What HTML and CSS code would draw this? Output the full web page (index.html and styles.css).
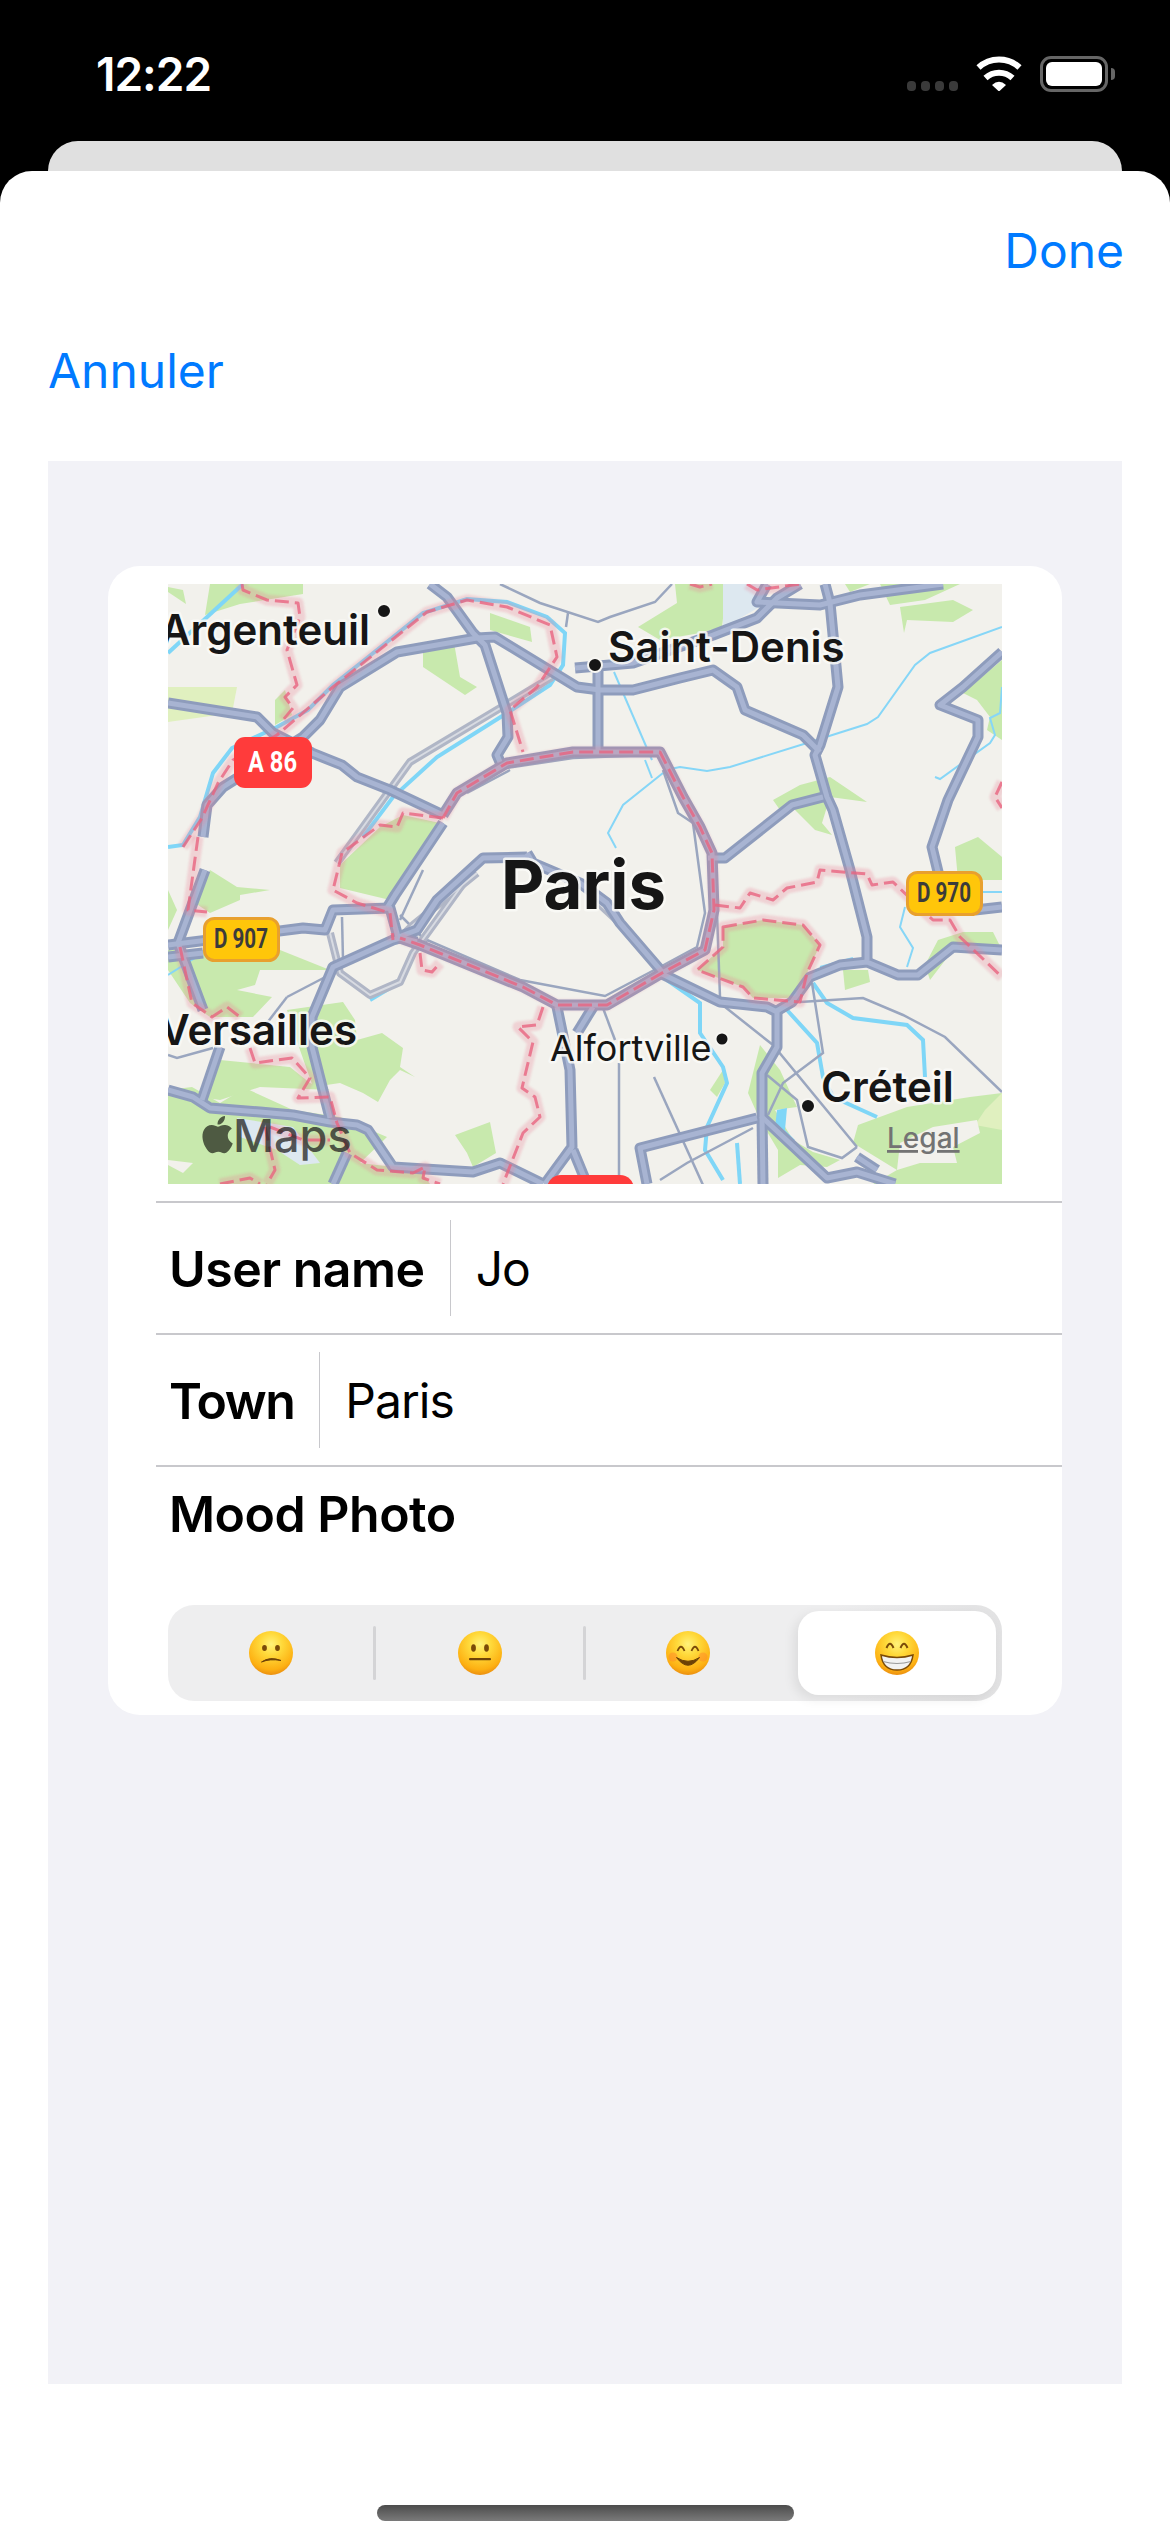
FILE: index.html
```html
<!DOCTYPE html>
<html lang="en">
<head>
    <meta charset="UTF-8">
    <meta name="viewport" content="width=device-width, initial-scale=1.0">
    <title>Mood</title>
    <link rel="stylesheet" href="styles.css">
</head>
<body>
    <div class="status-bar">
        <span class="hora">12:22</span>
        <div class="status-iconos">
            <div class="senal"><i></i><i></i><i></i><i></i></div>
            <svg class="wifi" width="48" height="36" viewBox="0 0 48 36">
                <path d="M3.500 12.500A30 30 0 0 1 44.500 12.500" fill="none" stroke="#fff" stroke-width="6"/>
                <path d="M10.500 23A20 20 0 0 1 37.500 23" fill="none" stroke="#fff" stroke-width="6"/>
                <path d="M17 30Q24 23.500 31 30L24 36.500Z" fill="#fff"/>
            </svg>
            <div class="bateria"><div class="bateria-nivel"></div></div>
            <div class="bateria-punta"></div>
        </div>
    </div>
    <div class="tarjeta-fondo"></div>

    <div class="hoja">
        <div class="fila-done"><span class="enlace">Done</span></div>
        <div class="fila-annuler"><span class="enlace">Annuler</span></div>

        <div class="contenido">
            <div class="tarjeta">
                <svg class="mapa" width="834" height="600" viewBox="168 584 834 600">
                    <defs>
                        <g id="vias">
                            <path d="M168 703L257 717L273 733L312 753L342 765L357 777L390 790L443 815"/>
                            <path d="M203 837L207 805L223 787L303 737L320 720L340 687L397 652L477 638L495 637L577 687L600 690L633 690L680 678L713 670L737 687L745 710L803 735L820 752"/>
                            <path d="M430 584L447 597L473 633L485 645L507 713L508 737L497 755L500 762"/>
                            <path d="M598 665L598 750"/>
                            <path d="M575 668L633 663L713 635L757 618L777 598L800 584"/>
                            <path d="M767 584L757 602L820 605L860 595L943 584"/>
                            <path d="M825 584L830 603L838 687L820 745L815 755L827 797L833 810L850 870L867 937L867 960"/>
                            <path d="M823 797L792 805L725 858L708 858"/>
                            <path d="M1002 652L963 687L940 705L978 720L978 737L948 800L932 847L940 880"/>
                            <path d="M1002 907L975 910"/>
                            <path d="M1002 950L953 947L918 975L898 975L867 962L840 965L810 977L792 1002L775 1012"/>
                            <path d="M660 973L720 1002L767 1007L777 1012L777 1047L762 1073L762 1117L827 1178L857 1172L895 1184"/>
                            <path d="M857 1157L877 1170"/>
                            <path d="M762 1117L763 1184"/>
                            <path d="M757 1118L640 1148L647 1184"/>
                            <path d="M443 815L457 793L507 763L573 752L660 752L683 797L700 827L712 853L714 910L705 950L662 973L607 1005L557 1005L523 987L420 945L400 938L393 940L333 967L312 1017L312 1047L330 1118"/>
                            <path d="M443 823L395 895L387 908"/>
                            <path d="M396 938L417 930L437 900L483 858L527 857"/>
                            <path d="M527 853L533 863L580 883L607 903L620 923L663 973"/>
                            <path d="M168 1090L193 1097L210 1108L260 1112L293 1115L330 1122L357 1125L368 1130L393 1167L473 1172L500 1163L543 1184"/>
                            <path d="M205 870L178 943L203 1010"/>
                            <path d="M220 1047L202 1100"/>
                            <path d="M347 1153L333 1184"/>
                            <path d="M168 945L303 928L325 930L333 910L390 908L398 937L417 942"/>
                            <path d="M168 957L203 953"/>
                            <path d="M557 1007L570 1070L572 1147L550 1177L545 1184"/>
                            <path d="M593 1007L577 1033"/>
                            <path d="M573 1150L587 1184"/>
                        </g>
                        <g id="grises">
                            <path d="M337 863L410 762L527 692L552 677"/>
                            <path d="M330 933L340 973L370 995L400 982L413 953L473 870"/>
                            <path d="M400 938L413 925L477 873"/>
                            <path d="M620 923L590 895"/>
                        </g>
                        <g id="frontera">
                            <path d="M242 584L243 590L267 600L298 603L300 617L287 650L297 685L285 697L293 708L283 720"/>
                            <path d="M183 847L202 818L218 783L233 760L277 735L333 687L427 612L467 600L507 607L550 625L557 657L537 687L510 710L523 752"/>
                            <path d="M443 818L457 793L507 763L573 752L660 752L683 797L700 827L712 853L714 910L705 950L662 973L607 1005L557 1005L523 987L420 945L400 938"/>
                            <path d="M443 818L403 813L397 827L380 825L342 853L333 890L357 903L390 913L393 940"/>
                            <path d="M198 837L188 910L207 912"/>
                            <path d="M180 947L192 1003L212 1017L227 1007L240 1017"/>
                            <path d="M250 1048L255 1063L292 1058L310 1078L298 1098L330 1097L337 1123L350 1153L377 1170L413 1173L425 1167L423 1178L440 1184"/>
                            <path d="M270 1127L303 1140L330 1140"/>
                            <path d="M265 1127L275 1170L267 1184"/>
                            <path d="M220 1184L250 1178L260 1184"/>
                            <path d="M543 1007L537 1025L518 1027L533 1042L522 1088L535 1097L540 1117L523 1133L503 1184"/>
                            <path d="M420 953L422 970L432 972L440 963"/>
                            <path d="M715 905L740 908L750 893L773 900L787 888L817 882L820 870L867 874L872 885L893 882L933 920L950 920L960 937L1002 977"/>
                            <path d="M723 927L763 920L803 925L820 945L807 973L800 1002L753 998L743 987L697 970L723 947Z"/>
                            <path d="M1002 782L995 797L1002 808"/>
                            <path d="M747 584L757 590L800 584"/>
                            <path d="M690 584L700 587L712 584"/>
                        </g>
                    </defs>

                    <rect class="mapa-fondo" x="168" y="584" width="834" height="600"/>

                    <g class="verde">
                        <polygon points="168,587 183,590 186,604 168,592"/>
                        <polygon points="210,584 303,584 303,594 240,604 205,615"/>
                        <polygon points="490,613 530,627 532,642 490,630"/>
                        <polygon points="423,653 453,637 460,677 477,687 465,695 423,667"/>
                        <polygon points="638,627 677,603 675,584 727,584 722,627 700,633 660,640"/>
                        <polygon points="773,800 800,785 830,777 867,802 830,797 822,823 832,835 815,830 790,805 780,810"/>
                        <polygon points="900,607 953,600 973,610 953,622 907,620 904,633"/>
                        <polygon points="845,584 870,584 850,592"/>
                        <polygon points="880,584 960,584 925,600 890,605"/>
                        <polygon points="955,847 978,837 1002,857 1002,880 958,880"/>
                        <polygon points="963,693 1002,660 1002,740 987,730 990,717 977,700"/>
                        <polygon points="340,865 380,827 403,815 440,823 390,900 340,888"/>
                        <polygon points="723,927 763,920 803,925 820,945 807,973 790,998 753,998 743,987 697,970 723,947"/>
                        <polygon points="168,890 177,910 168,930"/>
                        <polygon points="210,870 237,887 270,890 240,895 240,900 210,913 195,903"/>
                        <polygon points="168,950 280,950 330,970 260,970 255,985 237,990 272,997 253,1017 210,1017 190,1003 168,970"/>
                        <polygon points="287,1010 343,1002 355,1020 357,1040 382,1033 403,1048 400,1067 415,1077 400,1070 390,1080 378,1102 363,1093 340,1083 313,1087 300,1050"/>
                        <polygon points="168,1090 192,1087 220,1103 245,1088 293,1110 340,1117 387,1137 360,1163 420,1170 430,1184 168,1184"/>
                        <polygon points="220,1060 290,1067 310,1083 330,1090 260,1087 220,1100 200,1097"/>
                        <polygon points="455,1135 490,1122 496,1153 473,1167 467,1153"/>
                        <polygon points="748,1093 760,1045 780,1070 797,1107 775,1110 793,1140 813,1152 840,1160 827,1167 800,1165 778,1178 778,1150 760,1120"/>
                        <polygon points="858,1125 907,1107 970,1097 1002,1093 1002,1184 873,1184 897,1170 853,1143"/>
                        <polygon points="843,970 868,970 870,982 845,990"/>
                        <polygon points="938,940 963,932 993,932 1002,950 953,950 930,980 925,965"/>
                        <polygon points="710,1090 723,1070 725,1083 717,1097"/>
                        <polygon points="275,700 285,690 292,715 275,725"/>
                    </g>
                    <polygon class="verde-claro" points="168,687 237,687 232,713 168,722"/>
                    <polygon class="verde-claro" points="985,1110 1002,1093 1002,1130 975,1125"/>
                    <polygon class="mapa-fondo" points="168,1160 193,1163 183,1173 168,1165"/>
                    <polygon class="mapa-fondo" points="933,1127 977,1120 980,1133 953,1147 957,1163 920,1163 897,1170 900,1143"/>
                    <polygon class="lago" points="723,584 763,584 763,605 723,628"/>
                    <polygon class="lago" points="237,1118 293,1127 320,1163 300,1165 277,1150 240,1137"/>

                    <g class="agua-ancha">
                        <path d="M168 847L183 845L200 817L213 773L232 748L277 727L308 710L333 685L367 658L423 613L467 599L507 602L547 617L565 633L563 665L550 685L507 713L437 757L393 797L363 837"/>
                        <path d="M168 653L243 584"/>
                        <path d="M667 980L700 1003L700 1033L723 1067L727 1083L707 1127L705 1150L723 1180"/>
                        <path d="M787 1010L817 1043L823 1077L833 1097L877 1117"/>
                        <path d="M813 983L827 1003L853 1018L907 1025L923 1040L925 1077"/>
                        <path d="M737 1143L740 1184"/>
                        <path d="M370 1000L400 982"/>
                    </g>
                    <g class="agua-fina">
                        <path d="M663 773L623 805L608 833L616 848"/>
                        <path d="M645 760L652 778"/>
                        <path d="M665 770L680 767L707 771L730 767L807 743L867 724L878 717L915 665L930 653L1002 627"/>
                        <path d="M935 777L940 779L990 743L995 735L990 718L1000 713L1002 687"/>
                        <path d="M820 967L853 958"/>
                        <path d="M905 907L900 927L913 948L907 967"/>
                        <path d="M1002 892L982 892"/>
                        <path d="M614 672L652 760"/>
                        <path d="M168 975L195 958"/>
                    </g>
                    <polygon class="estanque" points="777,1110 787,1108 785,1130 795,1140 785,1140 775,1127"/>

                    <g class="via-fina">
                        <path d="M500 584L540 603L598 622L610 617L655 602L672 584"/>
                        <path d="M568 613L566 627"/>
                        <path d="M427 940L520 980L605 996L660 967L697 947L705 913L693 823L678 813L663 770"/>
                        <path d="M510 770L467 793"/>
                        <path d="M720 1003L773 1045L857 1147"/>
                        <path d="M717 913L720 997"/>
                        <path d="M800 1002L863 998L903 1015L945 1037L1002 1092"/>
                        <path d="M812 983L823 1053L783 1083L768 1115"/>
                        <path d="M767 1075L797 1100L808 1147L842 1158L857 1147"/>
                        <path d="M603 1008L615 1040"/>
                        <path d="M619 1063L619 1177"/>
                        <path d="M654 1077L703 1185"/>
                        <path d="M753 1128L687 1163L660 1180"/>
                        <path d="M287 997L333 973"/>
                        <path d="M287 997L267 1023"/>
                        <path d="M342 917L343 960"/>
                        <path d="M423 870L400 920"/>
                        <path d="M400 915L427 942"/>
                        <path d="M168 1055L177 1058L213 1048"/>
                        <path d="M507 768L573 758L650 755"/>
                    </g>

                    <use class="gris-borde" href="#grises"/>
                    <use class="gris-centro" href="#grises"/>
                    <use class="via-borde" href="#vias"/>
                    <use class="via-centro" href="#vias"/>
                    <use class="frontera-halo" href="#frontera"/>
                    <use class="frontera-linea" href="#frontera"/>

                    <circle class="punto" cx="384" cy="611" r="7"/>
                    <circle class="punto" cx="595" cy="665" r="7"/>
                    <circle class="punto" cx="722" cy="1039" r="6.500"/>
                    <circle class="punto" cx="808" cy="1106" r="7"/>

                    <text class="etiqueta fuerte" x="370" y="645" text-anchor="end">Argenteuil</text>
                    <text class="etiqueta fuerte" x="608" y="662">Saint-Denis</text>
                    <text class="etiqueta fuerte" x="357" y="1045" text-anchor="end">Versailles</text>
                    <text class="etiqueta fuerte" x="821" y="1102">Créteil</text>
                    <text class="etiqueta media" x="550" y="1061">Alfortville</text>
                    <text class="etiqueta grande" x="501" y="909">Paris</text>

                    <rect class="placa-roja" x="234" y="737" width="78" height="51" rx="11"/>
                    <text class="placa-texto blanco" x="248" y="772" textLength="49" lengthAdjust="spacingAndGlyphs">A 86</text>
                    <rect class="placa-amarilla" x="204.500" y="918.500" width="74" height="42" rx="10"/>
                    <text class="placa-texto oscuro" x="214" y="948" textLength="54" lengthAdjust="spacingAndGlyphs">D 907</text>
                    <rect class="placa-amarilla" x="907.500" y="872.500" width="74" height="42" rx="10"/>
                    <text class="placa-texto oscuro" x="917" y="902" textLength="54" lengthAdjust="spacingAndGlyphs">D 970</text>
                    <rect class="placa-roja" x="547" y="1175" width="87" height="40" rx="14"/>

                    <path class="manzana" transform="translate(199 1116) scale(1.550)" d="M12.152 6.896c-.948 0-2.415-1.078-3.960-1.040-2.040.027-3.910 1.183-4.961 3.014-2.117 3.675-.546 9.103 1.519 12.090 1.013 1.454 2.208 3.090 3.792 3.039 1.520-.065 2.090-.987 3.935-.987 1.831 0 2.350.987 3.960.948 1.637-.026 2.676-1.480 3.676-2.948 1.156-1.688 1.636-3.325 1.662-3.415-.039-.013-3.182-1.221-3.220-4.857-.026-3.040 2.480-4.494 2.597-4.559-1.429-2.090-3.623-2.324-4.390-2.376-2-.156-3.675 1.090-4.610 1.090zM15.530 3.830c.843-1.012 1.400-2.427 1.245-3.830-1.207.052-2.662.805-3.532 1.818-.780.896-1.454 2.338-1.273 3.714 1.338.104 2.715-.688 3.559-1.701"/>
                    <text class="maps" x="233" y="1152">Maps</text>
                    <text class="legal" x="887" y="1148">Legal</text>
                </svg>

                <div class="fila fila-primera">
                    <span class="fila-nombre">User name</span>
                    <span class="fila-corte"></span>
                    <span class="fila-valor">Jo</span>
                </div>
                <div class="fila">
                    <span class="fila-nombre nombre-corto">Town</span>
                    <span class="fila-corte"></span>
                    <span class="fila-valor">Paris</span>
                </div>
                <div class="fila fila-mood">
                    <span class="fila-nombre">Mood Photo</span>
                </div>

                <div class="segmentos">
                    <div class="segmento seg-uno">
                        <svg class="emoji" width="44" height="44" viewBox="0 0 44 44">
                            <defs>
                                <radialGradient id="cara" cx="50%" cy="30%" r="72%">
                                    <stop offset="0" stop-color="#fff27a"/>
                                    <stop offset="0.350" stop-color="#ffd93a"/>
                                    <stop offset="0.800" stop-color="#fdb012"/>
                                    <stop offset="1" stop-color="#e88a10"/>
                                </radialGradient>
                            </defs>
                            <circle cx="22" cy="22" r="22" fill="url(#cara)"/>
                            <ellipse cx="15.500" cy="17" rx="2.400" ry="3" fill="#7a4a08"/>
                            <ellipse cx="28.500" cy="17" rx="2.400" ry="3" fill="#7a4a08"/>
                            <path d="M12.500 31Q21 25 32 29.500Q21 27.500 12.500 31Z" fill="#6e4206" stroke="#6e4206" stroke-width="1"/>
                        </svg>
                    </div>
                    <div class="segmento seg-linea">
                        <svg class="emoji" width="44" height="44" viewBox="0 0 44 44">
                            <circle cx="22" cy="22" r="22" fill="url(#cara)"/>
                            <ellipse cx="15.500" cy="17" rx="2.400" ry="3.800" fill="#7a4a08"/>
                            <ellipse cx="28.500" cy="17" rx="2.400" ry="3.800" fill="#7a4a08"/>
                            <rect x="11" y="27" width="22" height="2.200" rx="1" fill="#6e4206"/>
                        </svg>
                    </div>
                    <div class="segmento seg-linea seg-tres">
                        <svg class="emoji" width="44" height="44" viewBox="0 0 44 44">
                            <circle cx="22" cy="22" r="22" fill="url(#cara)"/>
                            <circle cx="7" cy="26" r="4.500" fill="#ff8a2a" opacity="0.500"/>
                            <circle cx="37" cy="26" r="4.500" fill="#ff8a2a" opacity="0.500"/>
                            <path d="M11.500 20Q15 11.500 18.500 20M25.500 20Q29 11.500 32.500 20" fill="none" stroke="#7a4a08" stroke-width="1.800"/>
                            <path d="M10.500 26.500Q22 42 33.500 26.500Q22 34 10.500 26.500Z" fill="#6e4206" stroke="#6e4206" stroke-width="1"/>
                        </svg>
                    </div>
                    <div class="segmento seg-activo">
                        <svg class="emoji" width="44" height="44" viewBox="0 0 44 44">
                            <circle cx="22" cy="22" r="22" fill="url(#cara)"/>
                            <path d="M11.500 17Q15 8.500 18.500 17M25.500 17Q29 8.500 32.500 17" fill="none" stroke="#7a4a08" stroke-width="2"/>
                            <path d="M6 24Q22 29 38 24Q36 39 22 39Q8 39 6 24Z" fill="#f2f2f2" stroke="#7a4a08" stroke-width="1.500"/>
                            <path d="M8 30.500Q22 34.500 36 30.500" fill="none" stroke="#9a9a9a" stroke-width="1.200"/>
                        </svg>
                    </div>
                </div>
            </div>
        </div>

        <div class="indicador"></div>
    </div>
</body>
</html>
```

FILE: styles.css
```css
* {
    box-sizing: border-box;
}

html, body {
    margin: 0;
    padding: 0;
}

body {
    width: 1170px;
    height: 2532px;
    overflow: hidden;
    background-color: #000;
    font-family: Inter, "Liberation Sans", sans-serif;
    color: #000;
    display: flex;
    flex-direction: column;
}

/* barra de estado */
.status-bar {
    height: 141px;
    flex-shrink: 0;
    display: flex;
    justify-content: space-between;
    align-items: flex-start;
    padding: 44px 55px 0 96px;
}

.hora {
    font-size: 46px;
    line-height: 60px;
    font-weight: 600;
    color: #fff;
    letter-spacing: -1px;
}

.status-iconos {
    display: flex;
    align-items: flex-start;
    padding-top: 11px;
}

.senal {
    display: flex;
    gap: 5px;
    margin-top: 26px;
    margin-right: 17px;
}

.senal i {
    width: 9px;
    height: 10px;
    border-radius: 4px;
    background-color: #3a3a3a;
}

.wifi {
    display: block;
    margin-right: 17px;
}

.bateria {
    width: 68px;
    height: 36px;
    margin-top: 1px;
    border: 3px solid #666;
    border-radius: 11px;
    padding: 3px;
}

.bateria-nivel {
    width: 100%;
    height: 100%;
    background-color: #fff;
    border-radius: 6px;
}

.bateria-punta {
    width: 4px;
    height: 12px;
    margin: 13px 0 0 3px;
    background-color: #666;
    border-radius: 0 4px 4px 0;
}

.tarjeta-fondo {
    height: 30px;
    flex-shrink: 0;
    margin: 0 48px;
    background-color: #e0e0e0;
    border-radius: 30px 30px 0 0;
}

/* hoja */
.hoja {
    flex: 1;
    background-color: #fff;
    border-radius: 32px 32px 0 0;
    display: flex;
    flex-direction: column;
    padding: 0 48px;
}

.enlace {
    font-size: 48px;
    line-height: 60px;
    color: #007aff;
}

.fila-done {
    display: flex;
    justify-content: flex-end;
    height: 120px;
    padding-top: 50px;
    margin-right: -2px;
}

.fila-annuler {
    height: 170px;
    padding-top: 50px;
}

.contenido {
    height: 1923px;
    background-color: #f2f2f7;
    padding: 105px 60px 0;
}

.tarjeta {
    background-color: #fff;
    border-radius: 32px;
    padding: 18px 0 14px 48px;
}

.mapa {
    display: block;
    margin: 0 0 17px 12px;
}

.fila {
    height: 132px;
    border-top: 2px solid #c8c8cc;
    display: flex;
    align-items: center;
    padding: 2px 0 0 13px;
}

.fila-nombre {
    font-size: 50px;
    line-height: 60px;
    font-weight: 600;
    letter-spacing: -0.5px;
}

.nombre-corto {
    letter-spacing: -1.5px;
}

.fila-corte {
    width: 1px;
    height: 96px;
    margin: -2px 25px 0 25px;
    background-color: #c8c8cc;
}

.fila-valor {
    font-size: 48px;
    line-height: 60px;
    letter-spacing: -1px;
}

.fila-mood {
    height: 140px;
    align-items: flex-start;
    padding-top: 17px;
}

/* selector de emoji */
.segmentos {
    width: 834px;
    height: 96px;
    margin-left: 12px;
    display: flex;
    align-items: center;
    background: linear-gradient(90deg, #eeeeef 80%, #e2e2e3);
    border-radius: 26px;
}

.segmento {
    display: flex;
    align-items: center;
    justify-content: center;
    position: relative;
}

.seg-uno {
    width: 205px;
}

.seg-linea {
    width: 210px;
    border-left: 3px solid transparent;
}

.seg-linea::before {
    content: "";
    position: absolute;
    left: -3px;
    top: -5px;
    width: 3px;
    height: 54px;
    border-radius: 2px;
    background-color: #d4d4d6;
}

.seg-tres {
    padding-right: 4px;
}

.seg-activo {
    width: 198px;
    height: 84px;
    margin-left: 5px;
    background-color: #fff;
    border-radius: 21px;
    box-shadow: -4px 4px 12px rgba(0, 0, 0, 0.08);
}

.emoji {
    display: block;
}

.indicador {
    width: 417px;
    height: 16px;
    margin: 121px 0 0 329px;
    border-radius: 8px;
    background: linear-gradient(180deg, #4c4c4c, #7a7a7a);
}

/* mapa */
.mapa-fondo {
    fill: #f2f1ec;
}

.verde polygon {
    fill: #c8e9ad;
}

.verde-claro {
    fill: #e0f0bf;
}

.lago {
    fill: #dde8f0;
}

.agua-ancha path {
    fill: none;
    stroke: #7fd6f7;
    stroke-width: 4;
}

.agua-fina path {
    fill: none;
    stroke: #86d6f7;
    stroke-width: 2;
}

.estanque {
    fill: #7fd6f7;
}

.via-fina path {
    fill: none;
    stroke: #9aa6bf;
    stroke-width: 2.500;
}

use {
    fill: none;
    stroke-linejoin: round;
}

.gris-borde {
    stroke: #b0b6c6;
    stroke-width: 8;
}

.gris-centro {
    stroke: #d8dbe2;
    stroke-width: 2;
}

.via-borde {
    stroke: #8e9cbc;
    stroke-width: 11;
}

.via-centro {
    stroke: #a8b4d2;
    stroke-width: 5;
}

.frontera-halo {
    stroke: rgba(235, 130, 150, 0.28);
    stroke-width: 11;
    filter: blur(0.8px);
}

.frontera-linea {
    stroke: rgba(232, 100, 128, 0.8);
    stroke-width: 3;
    stroke-dasharray: 14 6;
    filter: blur(0.4px);
}

.punto {
    fill: #161616;
    stroke: #f7f6f2;
    stroke-width: 2;
}

.etiqueta {
    fill: #161616;
    stroke: rgba(250, 250, 247, 0.85);
    stroke-width: 5;
    paint-order: stroke;
    stroke-linejoin: round;
}

.fuerte {
    font-size: 42px;
    font-weight: 600;
}

.media {
    font-size: 36px;
    font-weight: 400;
}

.grande {
    font-size: 67px;
    font-weight: 700;
}

.placa-roja {
    fill: #ff3b3b;
}

.placa-amarilla {
    fill: #ffc60a;
    stroke: #e8a02e;
    stroke-width: 3;
}

.placa-texto {
    font-family: Roboto, "Liberation Sans", sans-serif;
    font-weight: 700;
    font-size: 29px;
}

.blanco {
    fill: #fff;
}

.oscuro {
    font-size: 27px;
    fill: #3b3b3b;
}

.manzana {
    fill: #4e5a42;
}

.maps {
    font-size: 45px;
    font-weight: 500;
    fill: rgba(35, 35, 35, 0.75);
}

.legal {
    font-size: 28px;
    font-weight: 500;
    fill: #737373;
    text-decoration: underline;
}
```
